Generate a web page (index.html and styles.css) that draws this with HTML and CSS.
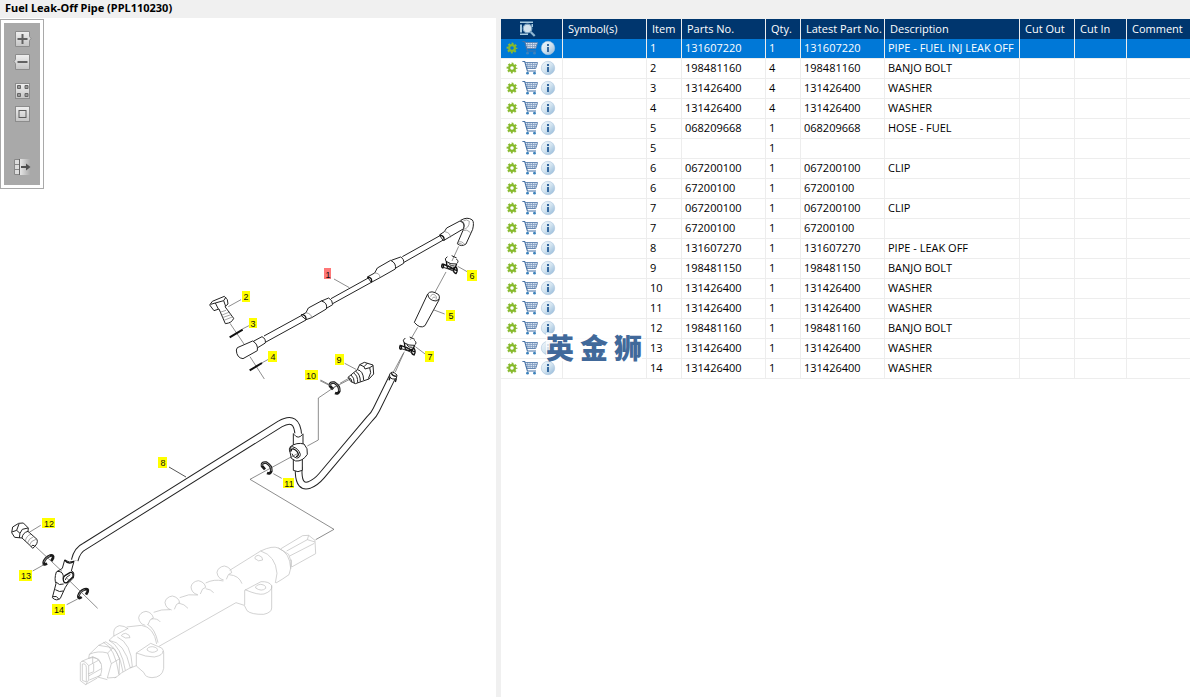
FILE: index.html
```html
<!DOCTYPE html>
<html lang="en">
<head>
<meta charset="utf-8">
<title>Fuel Leak-Off Pipe (PPL110230)</title>
<link rel="stylesheet" href="styles.css">
</head>
<body>
<svg class="sprite" aria-hidden="true">
  <defs>
    <linearGradient id="g-info" x1="0" y1="0" x2="1" y2="1"><stop offset="0" stop-color="#f2f7fb"/><stop offset=".5" stop-color="#d3e4f0"/><stop offset="1" stop-color="#8db4d6"/></linearGradient>
    <linearGradient id="g-btn" x1="0" y1="0" x2="0" y2="1"><stop offset="0" stop-color="#f0f0f0"/><stop offset="1" stop-color="#c4c4c4"/></linearGradient>
    <linearGradient id="g-fade"><stop offset="0" stop-color="#ececec"/><stop offset="1" stop-color="#ababab"/></linearGradient>
  </defs>
  <symbol id="gear" viewBox="0 0 16 16">
    <circle cx="8" cy="8" r="4.500" fill="none" stroke="#8abb33" stroke-width="1.800" stroke-dasharray="1.900 1.634" stroke-dashoffset=".95"/>
    <circle cx="8" cy="8" r="2.900" fill="none" stroke="#86b92a" stroke-width="2.200"/>
  </symbol>
  <symbol id="cart" viewBox="0 0 16 16">
    <path d="M3 2.500h12.600l-1.900 6H5z" fill="#dbe5f1"/>
    <path d="M3.200 4.500h12M3.800 6.500h10.900M5.500 2.500l.5 6M8 2.500l.2 6M10.500 2.500v6M13 2.500l-.7 6" fill="none" stroke="#7f9cc2" stroke-width=".8"/>
    <path d="M.4 1.500h2.300l2.700 9.500h8.600" fill="none" stroke="#4772a6" stroke-width="1.100"/>
    <path d="M3 2.500h12.600l-1.900 6H4.800" fill="none" stroke="#5c80ad" stroke-width=".9"/>
    <circle cx="5.500" cy="13.200" r="1.400" fill="#3d83bd"/><circle cx="12.500" cy="13.200" r="1.400" fill="#3d83bd"/>
  </symbol>
  <symbol id="info" viewBox="0 0 16 16">
    <circle cx="8" cy="8" r="6.700" fill="url(#g-info)" stroke="#a9c5de" stroke-width=".6"/>
    <path d="M7 4h2v2H7zM7 7h2v5H7z" fill="#34689f"/>
  </symbol>
</svg>

<main class="app">
  <header class="title"><h1>Fuel Leak-Off Pipe (PPL110230)</h1></header>

  <section class="drawing" aria-label="Exploded drawing">
    <svg class="plate" viewBox="0 0 496 679" role="img" aria-label="Fuel leak-off pipe assembly">
      <g transform="translate(0 -18)">
        <!-- upper leak-off rail -->
        <g class="ink" transform="translate(200 200) scale(.33333)">
          <path class="lead" d="M402 237l46 26M123 299l-38 21M147 377l-20 10M207 477l-22 12M90 370l42 62M150 470l43 67M434 490l34 18M360 542l30 15M395 566l54-28M776 139l-20 44M738 216l-38 70M653 382l-22 38M610 460l-32 60M773 199l30 17M702 330l32 12M646 440l32 24"/>
          <path d="M192 408L309 344M196 427L318 360M393 296L505 234M398 311L514 247M607 170L720 107M612 187L730 120"/>
          <path class="solid" d="M160 424L186 410Q198 416 196 429L170 445z"/>
          <path class="solid" d="M112 443L158 423Q175 432 172 452L129 476Q110 474 109 450z"/>
          <path class="solid" d="M362 304L386 294Q398 300 398 314L374 328z"/>
          <path class="solid" d="M303 346L318 338L325 324L364 303Q384 308 379 327L335 353L318 359z"/>
          <path class="solid" d="M574 181L602 171Q613 177 611 190L586 205z"/>
          <path class="solid" d="M502 231L524 219L532 204L572 181Q590 190 586 207L540 233L514 247z"/>
          <path class="thin" d="M318 338Q334 341 335 353M524 219Q540 219 540 233M735 95Q752 99 751 112"/>
          <path class="solid" d="M718 105L733 95L740 84L780 63Q797 70 791 86L749 111L730 122z"/>
          <path class="bold" d="M720 105Q734 108 732 121M304 344Q319 344 318 359M503 231Q518 233 514 247"/>
          <path class="thin" d="M735 95Q752 99 751 112"/>
          <path class="solid" d="M782 61Q802 49 817 60Q823 67 818 88L798 132Q784 142 772 131L789 91L791 85Q797 70 782 61z"/>
          <path class="thin" d="M789 88Q808 86 808 64Q800 56 790 63M789 92Q800 86 812 98M774 127Q785 121 795 134M773 133Q781 126 792 138"/>
          <path class="solid" d="M683 282Q693 268 716 284Q720 289 717 300L675 377Q660 388 643 367z"/>
          <path d="M683 282Q686 302 708 303L717 298"/><path class="thin" d="M692 290Q694 280 704 284Q713 290 708 299M697 296Q698 289 706 292"/>
          <g id="clip">
            <path d="M742 170Q732 176 738 184Q752 194 769 192Q779 185 769 177M755 167L770 174"/>
            <path class="bold" d="M727 191Q722 203 729 204Q733 198 727 191M728 192Q748 198 772 213M739 184L742 204M770 192L762 210M742 204Q754 211 764 202M766 198Q776 210 768 221Q760 218 760 208"/>
            <path d="M730 202Q748 207 762 214M746 190Q752 200 764 198M745 197L757 206"/>
          </g>
          <use href="#clip" transform="translate(-126 244)"/>
          <path class="solid" d="M29 315L37 304L73 289L82 299L84 312L75 320L101 355Q96 369 76 371L57 327L42 332z"/>
          <path d="M32 313L46 309L55 327M46 309L71 302L78 291M71 302L77 319"/>
          <path class="thin" d="M60 337L78 331M64 346L89 336M67 353L93 344M72 361L99 350"/>
          <path class="heavy" d="M89 412L128 389M149 511L186 489"/>
          <path class="solid" d="M444 532L472 509L479 494L493 487L519 495L521 522L507 537L466 551Q449 547 444 532z"/>
          <path d="M479 494L492 500L495 507M492 500L503 489M495 507L509 503L519 497M509 503L512 518L505 536M472 509Q490 512 491 540"/>
          <path d="M453 525Q463 532 463 550M461 519Q474 527 473 548M467 514Q481 522 481 545M446 533Q455 534 456 547"/>
          <g id="washer"><path class="ring" d="M399 568L390 558Q388 546 403 548Q419 557 418 573Q415 583 405 579"/><path class="ring-core" d="M390 558Q388 546 403 548Q419 557 418 573"/></g>
        </g>
        <!-- lower pipe with banjo fitting -->
        <g class="ink" transform="translate(230 350) scale(.33333)">
          <path class="lead" d="M327 102L265 144V270L232 288M196 314L60 388L312 538L257 569M130 371l25 14M523 5L496 66M272 90l30 16M330 100l28-16"/>
          <path id="pipe-run" class="pipe-edge" d="M-466 631Q-458 599 -436 589L150 222Q202 192 205 257M206 350V369Q208 415 238 405Q258 397 275 377L420 205Q432 194 439 179L489 77"/>
          <use href="#pipe-run" class="pipe-core"/>
          <path class="pipe-fill" d="M-466 631Q-458 599 -436 589L150 222Q202 192 205 257M206 350V369Q208 415 238 405Q258 397 275 377L420 205Q432 194 439 179L489 77"/>
          <path class="solid" d="M479 73Q485 59 501 75L499 86Q484 90 479 80z"/><path class="bold" d="M484 70Q488 79 499 79M481 80L477 91M499 86L496 96"/>
          <path class="solid" d="M190 250V292Q204 301 219 292V251"/><path d="M192 253Q204 270 218 253"/>
          <path class="solid" d="M190 320V361Q204 369 217 361V320"/>
          <path class="solid" d="M181 290Q200 276 222 282Q235 295 232 313Q218 335 197 333L184 325L180 306z"/>
          <path d="M180 306Q174 291 187 290Q206 295 211 313Q210 325 199 324Q188 321 186 311"/>
          <path class="bold" d="M184 304Q182 295 191 297Q204 303 205 314Q204 320 198 319"/>
          <path class="lead" d="M204 310l-24 13"/>
          <use href="#washer" transform="translate(-294 -210)"/><use href="#washer" transform="translate(-90 -450)" class="off"/>
        </g>
        <!-- left banjo bolt and washers -->
        <g class="ink" transform="translate(0 500) scale(.33333)">
          <path class="solid" d="M194 180Q208 190 222 184L214 213Q225 215 220 234L204 250L196 262L181 295Q169 305 157 293L168 251Q162 237 169 216L187 205z"/>
          <path class="bold" d="M194 180Q206 196 222 184M190 240Q188 232 196 226L211 217Q221 216 219 230L202 247Q192 252 190 240"/>
          <path d="M196 240Q196 232 211 224M171 214Q192 213 190 235M168 246Q177 258 191 252M166 269Q179 278 190 273M159 290Q170 285 177 298"/>
          <path class="solid" d="M35 98L38 81L56 70L70 69L85 84L84 94L111 118Q116 131 98 145L92 138L66 114L44 112z"/>
          <path d="M36 96L50 91L57 72M50 91L60 100L58 114M60 100L67 88L84 84M66 114Q68 98 84 94M94 139Q98 132 105 139"/>
          <path class="thin" d="M76 124Q78 108 93 102M82 130Q86 115 101 110M88 136Q92 122 108 118"/>
          <g id="washer-left"><path class="ring" d="M141 190Q130 198 131 187Q135 173 150 167Q162 164 159 174L154 183"/><path class="ring-core" d="M131 187Q135 173 150 167"/></g>
          <use href="#washer-left" transform="translate(104 101)"/>
          <path class="lead" d="M122 76L86 98M98 213L132 194M200 314L233 297M106 139L186 214M201 235L293 325"/>
        </g>
        <path class="lead ink" d="M169 467l17 10"/>
        <!-- fuel rail shown for reference -->
        <g class="ghost" transform="translate(60 520) scale(.33333)">
          <path d="M509 151L602 93Q638 76 655 84Q690 98 692 145L687 164Q666 179 648 189M602 93Q647 107 651 160L646 189M655 84L686 103Q697 124 692 147M663 86L728 47L746 46L765 61L767 101L695 141M680 93L742 59L765 66M742 59L746 46M689 108L763 70M694 119V141"/>
          <g id="port"><path d="M493 138Q474 141 471 157Q473 176 491 180M493 138Q512 142 515 158Q504 159 499 178"/></g>
          <use href="#port" transform="translate(-78 44)"/><use href="#port" transform="translate(-156 90)"/><use href="#port" transform="translate(-235 136)"/>
          <path d="M437 189Q462 176 490 183M507 164Q537 166 546 191M359 233Q386 220 414 225M437 206Q453 208 461 218M281 277Q304 267 330 269M355 249Q374 252 384 265M200 321L244 316Q282 321 290 372M274 297Q292 294 301 306M262 313Q285 325 294 368M160 349L204 325"/>
          <path d="M297 379L528 248L553 256L561 272Q574 284 611 283Q635 278 635 264V196M554 211V255M554 211L603 185Q628 184 635 197Q639 212 612 222Q594 226 555 209M587 204Q586 195 602 193Q619 195 617 205Q605 216 587 204"/>
          <path d="M229 399L272 370L305 384Q311 390 311 398V445Q307 472 276 473Q255 472 252 458L229 438zM229 399Q257 411 283 411Q310 406 309 393M261 390Q262 380 278 380Q295 383 292 392Q276 403 261 390M585 116Q584 107 596 106Q609 110 608 120Q595 127 585 116M184 347Q186 341 197 340Q211 345 210 353Q196 358 184 347"/>
          <path d="M162 349Q157 322 178 317Q194 317 205 327M160 349L147 361Q194 366 211 444L229 437M172 351Q214 370 217 440L184 459Q178 466 164 474M147 361Q184 379 196 451M138 366Q178 386 189 456M130 367Q165 382 177 464"/>
          <path d="M138 365L116 376L88 403L86 415M88 403Q113 391 143 399L160 382M143 399L154 431L142 474M116 376L146 381L164 387L179 416L177 464M154 431L179 416M142 474L169 472M86 415Q112 406 124 433Q129 465 113 471L142 479"/>
          <path d="M61 428Q65 421 77 427L86 437V480L77 494L61 482zM67 432Q78 429 79 443V486L67 481zM65 424L98 410L116 418L123 431M86 437L115 421M86 468L124 446M88 480L125 465M84 462L101 455V431M77 494L112 474M98 410V431"/>
        </g>
        <g class="callouts">
          <rect class="hot" x="324" y="268" width="7" height="11"/>
          <rect x="242" y="291" width="8" height="11"/><rect x="249" y="318" width="8" height="10"/><rect x="268" y="351" width="9" height="11"/>
          <rect x="446" y="310" width="9" height="11"/><rect x="467" y="270" width="10" height="11"/><rect x="425" y="351" width="9" height="11"/>
          <rect x="158" y="457" width="9" height="11"/><rect x="335" y="354" width="9" height="11"/><rect x="305" y="370" width="13" height="10"/>
          <rect x="283" y="478" width="11" height="10"/><rect x="42" y="518" width="13" height="10"/><rect x="19" y="570" width="13" height="11"/><rect x="52" y="604" width="13" height="11"/>
          <text x="328" y="278">1</text><text x="246" y="300">2</text><text x="253" y="327">3</text><text x="273" y="360">4</text>
          <text x="451" y="319">5</text><text x="472" y="279">6</text><text x="430" y="360">7</text><text x="163" y="466">8</text>
          <text x="339" y="363">9</text><text x="311" y="379">10</text><text x="289" y="487">11</text><text x="49" y="527">12</text>
          <text x="26" y="579">13</text><text x="59" y="613">14</text>
        </g>
      </g>
    </svg>

    <nav class="tools" aria-label="Drawing tools">
      <button aria-label="Zoom in"><svg viewBox="0 0 18 16"><path class="key" d="M2.500.5h14v5l1.500 2-1.500 2v6h-14z"/><path class="mark" d="M4.500 8h10M9.500 3v10"/></svg></button>
      <button aria-label="Zoom out"><svg viewBox="0 0 18 16"><path class="key" d="M2.500.5h14v15h-14v-6l-1.500-2 1.500-2z"/><path class="mark" d="M4.500 8h10"/></svg></button>
      <button class="apart" aria-label="Fit page"><svg viewBox="0 0 18 16"><rect class="key" x="2.500" y=".5" width="14" height="15"/><path class="cells" d="M4.500 2.500h3v3h-3zM12 2.500h3v3h-3zM4.500 10.500h3v3h-3zM12 10.500h3v3h-3z"/></svg></button>
      <button aria-label="Actual size"><svg viewBox="0 0 18 16"><rect class="key" x="2.500" y=".5" width="14" height="15"/><rect class="box" x="6" y="4.500" width="7" height="7"/></svg></button>
      <button class="far" aria-label="Toggle parts list"><svg viewBox="0 0 18 16"><path d="M1.500.5h5v15h-5z" fill="#ddd" stroke="#888"/><path d="M1.500 5.500h5M1.500 10.500h5" stroke="#888"/><path d="M6 0h11v16H6z" fill="url(#g-fade)"/><path d="M6.500 0v16" stroke="#666"/><path d="M8 8h6" stroke="#505050" stroke-width="2"/><path d="M13 4.500l4.500 3.500-4.500 3.500z" fill="#505050"/></svg></button>
    </nav>
  </section>

  <section class="list" aria-label="Parts list">
    <table>
      <colgroup><col class="c-act"><col class="c-wide"><col class="c-num"><col class="c-wide"><col class="c-num"><col class="c-wide"><col class="c-desc"><col class="c-out"><col class="c-in"><col></colgroup>
      <thead><tr>
        <th class="find"><button aria-label="Search"><svg viewBox="0 0 18 16"><path d="M1 .5h13V2H1zM1 3.500h2v8H1zM1 12.500h8V14H1zM12.500 3h1.500v3h-1.500z" fill="#a9cbe0"/><circle cx="8.500" cy="7.500" r="4.300" fill="#d4e3ee" stroke="#7fa6c3" stroke-width="1.200"/><path d="M11.700 11l4 4" stroke="#8fb6d2" stroke-width="2.200"/></svg></button></th>
        <th>Symbol(s)</th><th>Item</th><th>Parts No.</th><th>Qty.</th><th>Latest Part No.</th><th>Description</th><th>Cut Out</th><th>Cut In</th><th>Comment</th>
      </tr></thead>
      <tbody>
        <tr class="selected"><td class="acts"><button aria-label="Options"><svg><use href="#gear"/></svg></button><button aria-label="Add to cart"><svg><use href="#cart"/></svg></button><button aria-label="Info"><svg><use href="#info"/></svg></button></td><td></td><td>1</td><td>131607220</td><td>1</td><td>131607220</td><td>PIPE - FUEL INJ LEAK OFF</td><td></td><td></td><td></td></tr>
        <tr><td class="acts"><button aria-label="Options"><svg><use href="#gear"/></svg></button><button aria-label="Add to cart"><svg><use href="#cart"/></svg></button><button aria-label="Info"><svg><use href="#info"/></svg></button></td><td></td><td>2</td><td>198481160</td><td>4</td><td>198481160</td><td>BANJO BOLT</td><td></td><td></td><td></td></tr>
        <tr><td class="acts"><button aria-label="Options"><svg><use href="#gear"/></svg></button><button aria-label="Add to cart"><svg><use href="#cart"/></svg></button><button aria-label="Info"><svg><use href="#info"/></svg></button></td><td></td><td>3</td><td>131426400</td><td>4</td><td>131426400</td><td>WASHER</td><td></td><td></td><td></td></tr>
        <tr><td class="acts"><button aria-label="Options"><svg><use href="#gear"/></svg></button><button aria-label="Add to cart"><svg><use href="#cart"/></svg></button><button aria-label="Info"><svg><use href="#info"/></svg></button></td><td></td><td>4</td><td>131426400</td><td>4</td><td>131426400</td><td>WASHER</td><td></td><td></td><td></td></tr>
        <tr><td class="acts"><button aria-label="Options"><svg><use href="#gear"/></svg></button><button aria-label="Add to cart"><svg><use href="#cart"/></svg></button><button aria-label="Info"><svg><use href="#info"/></svg></button></td><td></td><td>5</td><td>068209668</td><td>1</td><td>068209668</td><td>HOSE - FUEL</td><td></td><td></td><td></td></tr>
        <tr><td class="acts"><button aria-label="Options"><svg><use href="#gear"/></svg></button><button aria-label="Add to cart"><svg><use href="#cart"/></svg></button><button aria-label="Info"><svg><use href="#info"/></svg></button></td><td></td><td>5</td><td></td><td>1</td><td></td><td></td><td></td><td></td><td></td></tr>
        <tr><td class="acts"><button aria-label="Options"><svg><use href="#gear"/></svg></button><button aria-label="Add to cart"><svg><use href="#cart"/></svg></button><button aria-label="Info"><svg><use href="#info"/></svg></button></td><td></td><td>6</td><td>067200100</td><td>1</td><td>067200100</td><td>CLIP</td><td></td><td></td><td></td></tr>
        <tr><td class="acts"><button aria-label="Options"><svg><use href="#gear"/></svg></button><button aria-label="Add to cart"><svg><use href="#cart"/></svg></button><button aria-label="Info"><svg><use href="#info"/></svg></button></td><td></td><td>6</td><td>67200100</td><td>1</td><td>67200100</td><td></td><td></td><td></td><td></td></tr>
        <tr><td class="acts"><button aria-label="Options"><svg><use href="#gear"/></svg></button><button aria-label="Add to cart"><svg><use href="#cart"/></svg></button><button aria-label="Info"><svg><use href="#info"/></svg></button></td><td></td><td>7</td><td>067200100</td><td>1</td><td>067200100</td><td>CLIP</td><td></td><td></td><td></td></tr>
        <tr><td class="acts"><button aria-label="Options"><svg><use href="#gear"/></svg></button><button aria-label="Add to cart"><svg><use href="#cart"/></svg></button><button aria-label="Info"><svg><use href="#info"/></svg></button></td><td></td><td>7</td><td>67200100</td><td>1</td><td>67200100</td><td></td><td></td><td></td><td></td></tr>
        <tr><td class="acts"><button aria-label="Options"><svg><use href="#gear"/></svg></button><button aria-label="Add to cart"><svg><use href="#cart"/></svg></button><button aria-label="Info"><svg><use href="#info"/></svg></button></td><td></td><td>8</td><td>131607270</td><td>1</td><td>131607270</td><td>PIPE - LEAK OFF</td><td></td><td></td><td></td></tr>
        <tr><td class="acts"><button aria-label="Options"><svg><use href="#gear"/></svg></button><button aria-label="Add to cart"><svg><use href="#cart"/></svg></button><button aria-label="Info"><svg><use href="#info"/></svg></button></td><td></td><td>9</td><td>198481150</td><td>1</td><td>198481150</td><td>BANJO BOLT</td><td></td><td></td><td></td></tr>
        <tr><td class="acts"><button aria-label="Options"><svg><use href="#gear"/></svg></button><button aria-label="Add to cart"><svg><use href="#cart"/></svg></button><button aria-label="Info"><svg><use href="#info"/></svg></button></td><td></td><td>10</td><td>131426400</td><td>1</td><td>131426400</td><td>WASHER</td><td></td><td></td><td></td></tr>
        <tr><td class="acts"><button aria-label="Options"><svg><use href="#gear"/></svg></button><button aria-label="Add to cart"><svg><use href="#cart"/></svg></button><button aria-label="Info"><svg><use href="#info"/></svg></button></td><td></td><td>11</td><td>131426400</td><td>1</td><td>131426400</td><td>WASHER</td><td></td><td></td><td></td></tr>
        <tr><td class="acts"><button aria-label="Options"><svg><use href="#gear"/></svg></button><button aria-label="Add to cart"><svg><use href="#cart"/></svg></button><button aria-label="Info"><svg><use href="#info"/></svg></button></td><td></td><td>12</td><td>198481160</td><td>1</td><td>198481160</td><td>BANJO BOLT</td><td></td><td></td><td></td></tr>
        <tr><td class="acts"><button aria-label="Options"><svg><use href="#gear"/></svg></button><button aria-label="Add to cart"><svg><use href="#cart"/></svg></button><button aria-label="Info"><svg><use href="#info"/></svg></button></td><td></td><td>13</td><td>131426400</td><td>1</td><td>131426400</td><td>WASHER</td><td></td><td></td><td></td></tr>
        <tr><td class="acts"><button aria-label="Options"><svg><use href="#gear"/></svg></button><button aria-label="Add to cart"><svg><use href="#cart"/></svg></button><button aria-label="Info"><svg><use href="#info"/></svg></button></td><td></td><td>14</td><td>131426400</td><td>1</td><td>131426400</td><td>WASHER</td><td></td><td></td><td></td></tr>
      </tbody>
    </table>
    <div class="watermark" lang="zh"><span>英</span><span>金</span><span>狮</span></div>
  </section>
</main>
</body>
</html>
```
FILE: styles.css
```css
* { box-sizing: border-box; }
body { margin: 0; background: #f0f0f0; color: #000; font: 11px/17px "Open Sans", "Noto Sans", sans-serif; }
button { display: block; margin: 0; padding: 0; border: 0; background: none; cursor: pointer; }
.sprite { position: absolute; width: 0; height: 0; }

.app {
  min-height: 100vh;
  display: grid;
  grid-template-columns: minmax(0, 496fr) minmax(0, 694fr);
  grid-template-rows: auto 1fr;
}
.title { grid-column: 1 / -1; padding: 0 5px 2px; }
.title h1 { margin: 0; font-size: 11px; line-height: 16px; font-weight: 700; font-family: "Noto Sans", sans-serif; }

.drawing { position: relative; background: #fff; overflow: hidden; }
.plate { display: block; width: 100%; height: auto; }
.ink { fill: none; stroke: #222; stroke-width: 3; stroke-linejoin: round; }
.ink .lead { stroke: #555; stroke-width: 2; fill: none; }
.lead.ink { stroke: #555; stroke-width: 1; }
.ink .thin { stroke: #777; stroke-width: 2; }
.ink .bold { stroke: #111; stroke-width: 4; }
.ink .heavy { stroke: #111; stroke-width: 6; }
.ink .ring { stroke: #1a1a1a; stroke-width: 8; }
.ring-core { stroke: #bbb; stroke-width: 2; }
.off { display: none; }
.ink .solid { fill: #fff; }
.pipe-edge { stroke: #222; stroke-width: 23; }
.pipe-core { display: none; }
.pipe-fill { stroke: #fff; stroke-width: 17; }
.ghost { fill: none; stroke: #bbb; stroke-width: 2; stroke-linejoin: round; }
.callouts rect { fill: #ff0; }
.callouts .hot { fill: #f77; }
.callouts text { font: 9px "Liberation Sans", Arial, sans-serif; text-anchor: middle; fill: #111; }

.tools {
  position: absolute;
  top: 1px;
  left: 0;
  display: flex;
  flex-direction: column;
  gap: 7px;
  padding: 11px 12px 13px;
  border: 1px solid #a9a9a9;
  background: #a9a9a9;
  box-shadow: inset 0 0 0 3px #fff;
}
.tools svg { display: block; width: 18px; height: 16px; overflow: visible; }
.tools .apart { margin-top: 6px; }
.tools .far { margin-top: 30px; }
.key { fill: url(#g-btn); stroke: #8c8c8c; }
.mark { stroke: #626262; stroke-width: 2; }
.cells { fill: #999; stroke: #666; }
.box { fill: none; stroke: #5c5c5c; stroke-width: 1; }

.list { position: relative; margin: 1px 0 0 4px; background: #fff; border-left: 1px solid #f0f0f0; }
table { width: 100%; table-layout: fixed; border-collapse: separate; border-spacing: 0; }
.c-act { width: 62px; }
.c-wide { width: 84px; }
.c-num { width: 35px; }
.c-desc { width: 135px; }
.c-out { width: 55px; }
.c-in { width: 52px; }
th, td { height: 20px; padding: 0 3px; border-right: 1px solid #ededed; text-align: left; vertical-align: top; white-space: nowrap; overflow: hidden; }
th { padding: 1px 5px 0; background: #00366e; color: #fff; font-weight: 400; }
td { border-bottom: 1px solid #ededed; }
th:last-child, td:last-child { border-right: 0; }
.selected td { background: #0078d7; color: #fff; }
.find svg { display: block; width: 18px; height: 16px; margin: 1px 0 0 13px; }
.acts button { display: inline-block; vertical-align: top; margin-top: 1px; }
.acts button + button { margin-left: 2px; }
.acts svg { display: block; width: 16px; height: 16px; }
.watermark {
  position: absolute;
  top: 314px;
  left: 45px;
  display: flex;
  gap: 6px;
  background: rgba(255, 255, 255, .8);
  color: #41699a;
  font: 900 28px/28px "Noto Sans CJK SC", sans-serif;
}
```
